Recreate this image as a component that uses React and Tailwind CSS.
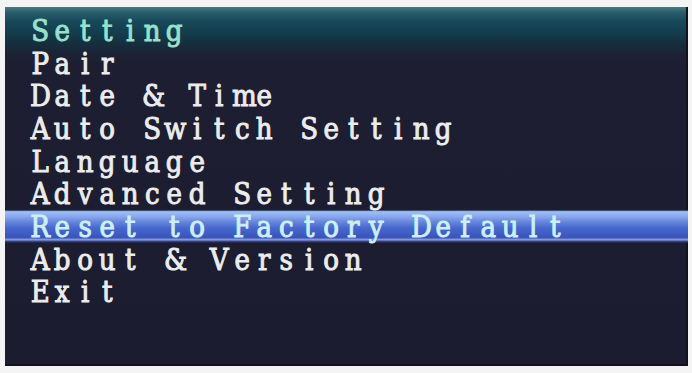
import React from 'react';

const menuItems = [
  { id: 'setting', label: 'Setting', kind: 'title' },
  { id: 'pair', label: 'Pair' },
  { id: 'date', label: 'Date & Time' },
  { id: 'auto', label: 'Auto Switch Setting' },
  { id: 'lang', label: 'Language' },
  { id: 'adv', label: 'Advanced Setting' },
  { id: 'reset', label: 'Reset to Factory Default', kind: 'selected' },
  { id: 'about', label: 'About & Version' },
  { id: 'exit', label: 'Exit' },
];

// OSD fonts are fixed-pitch, so every glyph sits in its own cell
const OsdText = ({ text }) => (
  <span className="flex pt-[2px]">
    {text.split('').map((ch, i) => (
      <span key={i} className="inline-block w-[22.4px] text-center whitespace-pre scale-x-[0.9]">
        {ch}
      </span>
    ))}
  </span>
);

const MenuRow = ({ item }) => {
  if (item.kind === 'selected') {
    return (
      <div className="h-[32.7px] flex items-center pl-[24px] text-[#cdeff0] bg-[linear-gradient(180deg,#1d2035_0%,#a2bef4_5%,#88a8ee_20%,#6686dc_36%,#4767cc_55%,#3954bc_84%,#8c9fe0_90%,#2b3782_96%,#1c1e30_100%)]">
        <OsdText text={item.label} />
      </div>
    );
  }
  return (
    <div
      className={`h-[32.7px] flex items-center pl-[24px] ${
        item.kind === 'title' ? 'text-[#98e0cc]' : 'text-[#ececec]'
      }`}
    >
      <OsdText text={item.label} />
    </div>
  );
};

export default function App() {
  return (
    <div className="w-[692px] h-[373px] bg-[#f4f4f4] pt-[7px] pl-[5px]">
      <div className="w-[683px] h-[359px] pt-[7px] font-['DejaVu_Serif',serif] font-normal text-[29px] leading-none [-webkit-text-stroke:1px_currentColor] bg-[linear-gradient(180deg,#51777f_0px,#2b5f6c_5px,#17495a_14px,#133d4d_26px,#162f3f_36px,#1c2233_48px,#1d1e31_60px,#1b1c2f_100%)] shadow-[inset_-2px_-2px_0_#11121d]">
        {menuItems.map((item) => (
          <MenuRow key={item.id} item={item} />
        ))}
      </div>
    </div>
  );
}
